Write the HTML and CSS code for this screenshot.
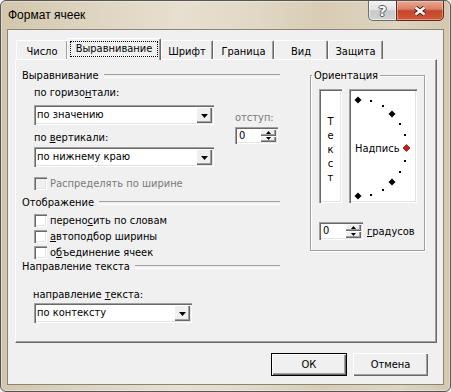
FILE: index.html
```html
<!DOCTYPE html>
<html>
<head>
<meta charset="utf-8">
<link rel="stylesheet" href="styles.css">
</head>
<body>
<div class="window">
  <div class="titlebar">
    <span class="title">Формат ячеек</span>
    <div class="caption-btns">
      <div class="cbtn help">?</div>
      <div class="cbtn close">
        <svg width="14" height="10" viewBox="0 0 14 10"><path d="M2.5 1.5 L11.5 8.5 M11.5 1.5 L2.5 8.5" stroke="#5a2418" stroke-width="4.5"/><path d="M2.5 1.5 L11.5 8.5 M11.5 1.5 L2.5 8.5" stroke="#fff" stroke-width="2.4"/></svg>
      </div>
    </div>
  </div>
  <div class="client">
    <div class="tabs">
      <div class="tab w-num">Число</div>
      <div class="tab sel w-align"><span class="focus">Выравнивание</span></div>
      <div class="tab w-font">Шрифт</div>
      <div class="tab w-border">Граница</div>
      <div class="tab w-view">Вид</div>
      <div class="tab w-prot">Защита</div>
    </div>
    <div class="panel">
      <div class="leftcol">
        <div class="sect"><span>Выравнивание</span></div>
        <div class="align-row">
          <div class="align-left">
            <div class="lbl first">по горизо<u>н</u>тали:</div>
            <div class="combo c180 gap6"><span class="val">по значению</span><span class="ddbtn"><svg width="7" height="4" viewBox="0 0 7 4"><path d="M0 0H7L3.5 4Z" fill="#000"/></svg></span></div>
            <div class="lbl gap6">по <u>в</u>ертикали:</div>
            <div class="combo c180 gap3"><span class="val">по нижнему краю</span><span class="ddbtn"><svg width="7" height="4" viewBox="0 0 7 4"><path d="M0 0H7L3.5 4Z" fill="#000"/></svg></span></div>
          </div>
          <div class="indent">
            <div class="lbl dis">отступ:</div>
            <div class="spin s43"><span class="sv">0</span><span class="spinbtns"><span class="sb"><svg width="5" height="3" viewBox="0 0 5 3"><path d="M2.5 0L5 3H0Z" fill="#000"/></svg></span><span class="sb"><svg width="5" height="3" viewBox="0 0 5 3"><path d="M0 0H5L2.5 3Z" fill="#000"/></svg></span></span></div>
          </div>
        </div>
        <div class="chk dis r-dist"><span class="box"></span>Распределять по ширине</div>
        <div class="sect s-disp"><span>Отображение</span></div>
        <div class="chk r-wrap"><span class="box"></span>перено<u>с</u>ить по словам</div>
        <div class="chk r-next"><span class="box"></span><u>а</u>втоподбор ширины</div>
        <div class="chk r-next"><span class="box"></span>о<u>б</u>ъединение ячеек</div>
        <div class="sect s-dir"><span>Направление текста</span></div>
        <div class="lbl dirlbl">направление <u>т</u>екста:</div>
        <div class="combo c158 gap2"><span class="val">по контексту</span><span class="ddbtn"><svg width="7" height="4" viewBox="0 0 7 4"><path d="M0 0H7L3.5 4Z" fill="#000"/></svg></span></div>
      </div>
      <fieldset class="orient">
        <legend>Ориентация</legend>
        <div class="orient-row">
          <div class="vtext"><span>Т</span><span>е</span><span>к</span><span>с</span><span>т</span></div>
          <div class="dial">
            <svg class="dial-canvas" width="68" height="114" viewBox="0 0 68 114" shape-rendering="crispEdges">
              <path d="M9 7.5l3.5 3.5-3.5 3.5-3.5-3.5z" fill="#000" shape-rendering="auto"/>
              <rect x="21" y="11" width="2" height="2" fill="#000"/>
              <rect x="33" y="16" width="2" height="2" fill="#000"/>
              <path d="M43 21.5l3.5 3.5-3.5 3.5-3.5-3.5z" fill="#000" shape-rendering="auto"/>
              <rect x="50" y="34" width="2" height="2" fill="#000"/>
              <rect x="55" y="45" width="2" height="2" fill="#000"/>
              <path d="M57.5 55.5l3.5 3.5-3.5 3.5-3.5-3.5z" fill="#d01818" stroke="#6a0000" stroke-width="0.6" shape-rendering="auto"/>
              <rect x="55" y="71" width="2" height="2" fill="#000"/>
              <rect x="50" y="82" width="2" height="2" fill="#000"/>
              <path d="M43 89.5l3.5 3.5-3.5 3.5-3.5-3.5z" fill="#000" shape-rendering="auto"/>
              <rect x="33" y="100" width="2" height="2" fill="#000"/>
              <rect x="21" y="105" width="2" height="2" fill="#000"/>
              <path d="M9 103.5l3.5 3.5-3.5 3.5-3.5-3.5z" fill="#000" shape-rendering="auto"/>
            </svg>
            <span class="dial-label">Надпись</span>
          </div>
        </div>
        <div class="deg-row">
          <div class="spin s44"><span class="sv">0</span><span class="spinbtns"><span class="sb"><svg width="5" height="3" viewBox="0 0 5 3"><path d="M2.5 0L5 3H0Z" fill="#000"/></svg></span><span class="sb"><svg width="5" height="3" viewBox="0 0 5 3"><path d="M0 0H5L2.5 3Z" fill="#000"/></svg></span></span></div>
          <span class="deg-lbl"><u>г</u>радусов</span>
        </div>
      </fieldset>
    </div>
    <div class="buttons">
      <button class="btn ok">ОК</button>
      <button class="btn cancel">Отмена</button>
    </div>
  </div>
</div>
</body>
</html>
```

FILE: styles.css
```css
* { box-sizing: border-box; }
html, body { margin: 0; padding: 0; }
body {
  width: 451px;
  height: 392px;
  overflow: hidden;
  background: #f6f6f6;
  font-family: "DejaVu Sans Condensed", "Liberation Sans", sans-serif;
  font-size: 11px;
  color: #000;
}
u { text-decoration: underline; text-underline-offset: 1px; }

.window {
  width: 451px;
  height: 392px;
  border: 1px solid #565656;
  border-radius: 6px;
  background: linear-gradient(90deg, #d2c6ac 0%, #ddd3bf 18%, #e7dfcf 40%, #e2d9c7 55%, #d8ccb4 72%, #ded4c0 88%, #d4c8ae 100%);
  box-shadow: inset 0 0 0 1px rgba(255,255,255,0.35);
  padding: 0 6px 6px;
  display: flex;
  flex-direction: column;
  overflow: hidden;
}
.titlebar {
  height: 28px;
  flex: none;
  margin: 0 -6px;
  padding: 0 6px 0 7px;
  display: flex;
  justify-content: space-between;
  align-items: flex-start;
}
.title {
  margin-top: 7px;
  font-family: "Liberation Sans", sans-serif;
  font-size: 12px;
  line-height: 15px;
  color: #000;
}
.caption-btns { display: flex; margin-top: -1px; }
.cbtn {
  height: 21px;
  display: flex;
  align-items: center;
  justify-content: center;
}
.help {
  width: 28px;
  border: 1px solid #6e6e6e;
  border-right: 0;
  border-bottom-left-radius: 5px;
  background: linear-gradient(#f3f3f3 0%, #e2e2e2 45%, #c9c9c9 52%, #d2d2d2 100%);
  box-shadow: inset 0 0 0 1px rgba(255,255,255,0.55);
  color: #fff;
  font-family: "DejaVu Sans", sans-serif;
  font-weight: bold;
  font-size: 14px;
  line-height: 14px;
  text-shadow: 1px 0 #555, -1px 0 #555, 0 1px #555, 0 -1px #555;
}
.close {
  width: 48px;
  border: 1px solid #5e2a20;
  border-bottom-right-radius: 5px;
  background: linear-gradient(#e9a995 0%, #dc8066 42%, #c5452a 52%, #d0583b 100%);
  box-shadow: inset 0 0 0 1px rgba(255,220,210,0.45);
}

.client {
  flex: 1;
  border: 1px solid #8a857a;
  background: #f0f0f0;
  padding: 8px 6px 0 7px;
  display: flex;
  flex-direction: column;
}

/* tabs */
.tabs {
  display: flex;
  height: 22px;
  margin-bottom: -1px;
  padding-left: 1px;
  flex: none;
}
.tab {
  height: 19px;
  margin-top: 2px;
  border-top: 1px solid #fff;
  border-left: 1px solid #fff;
  border-right: 1px solid #696969;
  box-shadow: inset -1px 0 0 #a0a0a0;
  border-radius: 2px 2px 0 0;
  text-align: center;
  padding-top: 4px;
  line-height: 13px;
  white-space: nowrap;
}
.tab.sel {
  height: 22px;
  margin-top: 0;
  margin-left: -1px;
  padding-top: 2px;
  position: relative;
  z-index: 1;
  background: #f0f0f0;
}
.focus {
  display: inline-block;
  border: 1px dotted #000;
  line-height: 12px;
  padding: 1px 5px;
}
.w-num { width: 52px; }
.w-align { width: 94px; }
.w-font { width: 52px; }
.w-border { width: 61px; }
.w-view { width: 54px; }
.w-prot { width: 55px; }

/* panel */
.panel {
  width: 422px;
  height: 284px;
  flex: none;
  border: 1px solid;
  border-color: #fff #696969 #696969 #fff;
  box-shadow: inset -1px -1px 0 #a0a0a0;
  padding: 9px 0 0 6px;
  display: flex;
  align-items: flex-start;
}
.leftcol {
  width: 258px;
  display: flex;
  flex-direction: column;
}
.sect {
  display: flex;
  align-items: center;
  height: 13px;
  line-height: 13px;
  white-space: nowrap;
}
.sect::after {
  content: "";
  flex: 1;
  height: 2px;
  margin-left: 5px;
  border-top: 1px solid #a0a0a0;
  border-bottom: 1px solid #fff;
}
.s-disp { margin-top: 6px; }
.s-dir { margin-top: 1px; }

.lbl { height: 13px; line-height: 13px; white-space: nowrap; }
.lbl.first { margin-top: 4px; }
.dis { color: #7a7a7a; }
.gap6 { margin-top: 6px; }
.gap3 { margin-top: 3px; }
.gap2 { margin-top: 2px; }

.align-row { display: flex; align-items: flex-start; }
.align-left { margin-left: 12px; display: flex; flex-direction: column; }
.indent { margin-left: 21px; margin-top: 29px; display: flex; flex-direction: column; }
.indent .spin { margin-top: 3px; }

.combo {
  height: 20px;
  display: flex;
  align-items: stretch;
  padding: 2px;
  background: #fff;
  box-shadow: inset 1px 1px 0 #a0a0a0, inset 2px 2px 0 #696969, inset -1px -1px 0 #fff, inset -2px -2px 0 #e3e3e3;
}
.c180 { width: 180px; }
.c158 { width: 158px; margin-left: 12px; }
.align-left .combo { margin-left: 0; }
.val {
  flex: 1;
  padding-left: 1px;
  line-height: 16px;
  white-space: nowrap;
  overflow: hidden;
}
.ddbtn, .sb {
  background: #f0f0f0;
  box-shadow: inset 1px 1px 0 #fff, inset -1px -1px 0 #696969, inset -2px -2px 0 #a0a0a0;
  display: flex;
  align-items: center;
  justify-content: center;
}
.ddbtn { width: 16px; }
.ddbtn svg { display: block; margin-top: 1px; }

.spin {
  height: 18px;
  display: flex;
  padding: 2px;
  background: #fff;
  box-shadow: inset 1px 1px 0 #a0a0a0, inset 2px 2px 0 #696969, inset -1px -1px 0 #fff, inset -2px -2px 0 #e3e3e3;
}
.s43 { width: 43px; height: 17px; }
.s44 { width: 44px; }
.sv { flex: 1; padding-left: 2px; line-height: 14px; }
.s43 .sv { line-height: 13px; }
.spinbtns { width: 16px; display: flex; flex-direction: column; }
.sb { flex: 1; }
.sb svg { display: block; }

.chk {
  display: flex;
  align-items: center;
  height: 13px;
  line-height: 13px;
  margin-left: 12px;
  white-space: nowrap;
}
.box {
  width: 13px;
  height: 13px;
  margin-right: 3px;
  background: #fff;
  box-shadow: inset 1px 1px 0 #a0a0a0, inset 2px 2px 0 #696969, inset -1px -1px 0 #fff, inset -2px -2px 0 #e3e3e3;
}
.chk.dis .box { background: #f0f0f0; }
.r-dist { margin-top: 10px; }
.r-wrap { margin-top: 5px; }
.r-next { margin-top: 3px; }
.dirlbl { margin-top: 15px; margin-left: 11px; }

/* orientation */
.orient {
  width: 115px;
  min-width: 0;
  margin: 0 0 0 30px;
  padding: 0 0 10px 0;
  border: 1px solid #a0a0a0;
  box-shadow: inset 1px 1px 0 #fff, 1px 1px 0 #fff;
}
.orient legend {
  margin-left: 1px;
  padding: 0 2px;
  line-height: 13px;
  font-size: 11px;
}
.orient-row {
  display: flex;
  margin: 7px 0 0 8px;
  gap: 7px;
}
.vtext {
  width: 23px;
  height: 114px;
  background: #fff;
  box-shadow: inset 1px 1px 0 #a0a0a0, inset 2px 2px 0 #696969, inset -1px -1px 0 #fff, inset -2px -2px 0 #e3e3e3;
  display: flex;
  flex-direction: column;
  align-items: center;
  padding-top: 26px;
  line-height: 14px;
}
.dial {
  width: 68px;
  height: 114px;
  position: relative;
  background: #fff;
  box-shadow: inset 1px 1px 0 #a0a0a0, inset 2px 2px 0 #696969, inset -1px -1px 0 #fff, inset -2px -2px 0 #e3e3e3;
  display: flex;
  align-items: center;
  padding: 4px 0 0 6px;
}
.dial-canvas { position: absolute; left: 0; top: 0; }
.dial-label { position: relative; line-height: 13px; white-space: nowrap; }
.deg-row {
  display: flex;
  align-items: center;
  margin: 19px 0 0 8px;
  gap: 4px;
}
.deg-lbl { line-height: 13px; }

/* buttons */
.buttons {
  display: flex;
  justify-content: flex-end;
  gap: 6px;
  margin-top: 10px;
  width: 422px;
  padding-right: 9px;
}
.btn {
  height: 23px;
  font-family: inherit;
  font-size: 11px;
  color: #000;
  background: #f0f0f0;
  border: 0;
  padding: 0;
  margin: 0;
  box-shadow: inset 1px 1px 0 #fff, inset -1px -1px 0 #696969, inset -2px -2px 0 #a0a0a0;
}
.ok {
  width: 76px;
  border: 1px solid #000;
}
.cancel { width: 75px; }
```
